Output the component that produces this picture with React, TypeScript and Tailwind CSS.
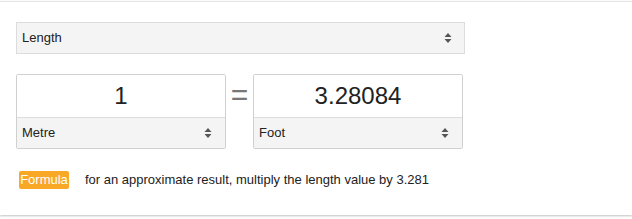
const font = { fontFamily: '"Liberation Sans", Arial, sans-serif' }

function Arrows() {
  return (
    <svg width="8" height="12" viewBox="0 0 8 12" className="shrink-0">
      <path d="M4 1 L7.5 5 L0.5 5 Z" fill="#555" />
      <path d="M4 11 L7.5 7 L0.5 7 Z" fill="#555" />
    </svg>
  )
}

function UnitBox({ value, unit }: { value: string; unit: string }) {
  return (
    <div className="flex w-[210px] flex-col rounded-[2px] border border-[#d0d0d0]">
      <div className="flex h-[42px] items-center justify-center bg-white text-[24px] text-[#222]">{value}</div>
      <div className="flex h-[31px] items-center justify-between border-t border-[#dcdcdc] bg-[#f4f4f4] pl-[5px] pr-[13px] text-[13px] text-[#222]">
        <span>{unit}</span>
        <Arrows />
      </div>
    </div>
  )
}

export default function App() {
  return (
    <div className="h-[219px] w-[632px] bg-white pt-px" style={font}>
      <div className="h-[214px] border-t border-[#e6e6e6] bg-white pl-[16px] pt-[20px] shadow-[0_1px_2px_rgba(0,0,0,0.25)]">
        <div className="flex h-[32px] w-[449px] items-center justify-between border border-[#dcdcdc] bg-[#f4f4f4] pl-[5px] pr-[12px] text-[13px] text-[#222]">
          <span>Length</span>
          <Arrows />
        </div>

        <div className="mt-[20px] flex items-start">
          <UnitBox value="1" unit="Metre" />
          <div className="flex w-[27px] justify-center pt-[6px] text-[30px] leading-none text-[#777]">=</div>
          <UnitBox value="3.28084" unit="Foot" />
        </div>

        <div className="mt-[21px] flex items-center">
          <span className="ml-[3px] flex h-[18px] w-[50px] items-center justify-center rounded-[2px] bg-[#f9a825] text-[13px] text-white">
            Formula
          </span>
          <span className="ml-[16px] text-[13px] text-[#222]">
            for an approximate result, multiply the length value by 3.281
          </span>
        </div>
      </div>
    </div>
  )
}
